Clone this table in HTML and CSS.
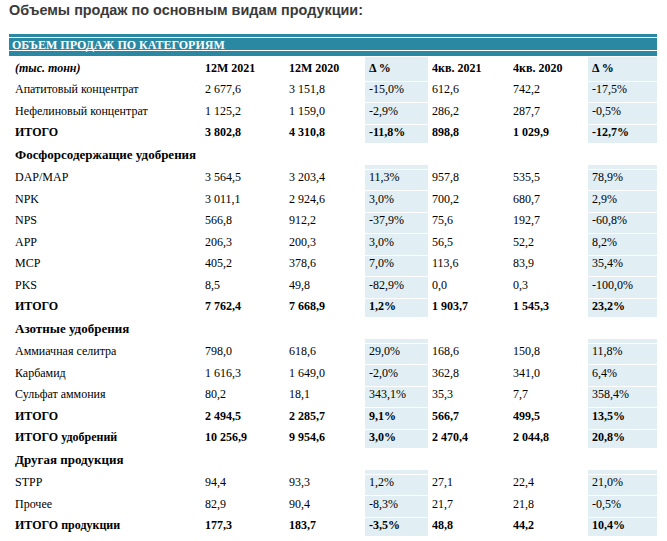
FILE: index.html
```html
<!DOCTYPE html>
<html lang="ru">
<head>
<meta charset="utf-8">
<title>Объемы продаж</title>
<link rel="stylesheet" href="styles.css">
</head>
<body>
<div class="page">
  <h1 class="title">Объемы продаж по основным видам продукции:</h1>
  <div class="bar"><span class="bar-label">ОБЪЕМ ПРОДАЖ ПО КАТЕГОРИЯМ</span></div>
  <div class="tbl">
    <div class="row head">
      <div class="c lbl unit">(тыс. тонн)</div><div class="c">12M 2021</div><div class="c">12M 2020</div><div class="c d">Δ %</div><div class="c">4кв. 2021</div><div class="c">4кв. 2020</div><div class="c d">Δ %</div>
    </div>
    <div class="row">
      <div class="c lbl">Апатитовый концентрат</div><div class="c">2 677,6</div><div class="c">3 151,8</div><div class="c d">-15,0%</div><div class="c">612,6</div><div class="c">742,2</div><div class="c d">-17,5%</div>
    </div>
    <div class="row">
      <div class="c lbl">Нефелиновый концентрат</div><div class="c">1 125,2</div><div class="c">1 159,0</div><div class="c d">-2,9%</div><div class="c">286,2</div><div class="c">287,7</div><div class="c d">-0,5%</div>
    </div>
    <div class="row tot end">
      <div class="c lbl">ИТОГО</div><div class="c">3 802,8</div><div class="c">4 310,8</div><div class="c d">-11,8%</div><div class="c">898,8</div><div class="c">1 029,9</div><div class="c d">-12,7%</div>
    </div>
    <div class="row sec">
      <div class="c lbl">Фосфорсодержащие удобрения</div><div class="c"></div><div class="c"></div><div class="c d"></div><div class="c"></div><div class="c"></div><div class="c d"></div>
    </div>
    <div class="row">
      <div class="c lbl">DAP/MAP</div><div class="c">3 564,5</div><div class="c">3 203,4</div><div class="c d">11,3%</div><div class="c">957,8</div><div class="c">535,5</div><div class="c d">78,9%</div>
    </div>
    <div class="row">
      <div class="c lbl">NPK</div><div class="c">3 011,1</div><div class="c">2 924,6</div><div class="c d">3,0%</div><div class="c">700,2</div><div class="c">680,7</div><div class="c d">2,9%</div>
    </div>
    <div class="row">
      <div class="c lbl">NPS</div><div class="c">566,8</div><div class="c">912,2</div><div class="c d">-37,9%</div><div class="c">75,6</div><div class="c">192,7</div><div class="c d">-60,8%</div>
    </div>
    <div class="row">
      <div class="c lbl">APP</div><div class="c">206,3</div><div class="c">200,3</div><div class="c d">3,0%</div><div class="c">56,5</div><div class="c">52,2</div><div class="c d">8,2%</div>
    </div>
    <div class="row">
      <div class="c lbl">MCP</div><div class="c">405,2</div><div class="c">378,6</div><div class="c d">7,0%</div><div class="c">113,6</div><div class="c">83,9</div><div class="c d">35,4%</div>
    </div>
    <div class="row">
      <div class="c lbl">PKS</div><div class="c">8,5</div><div class="c">49,8</div><div class="c d">-82,9%</div><div class="c">0,0</div><div class="c">0,3</div><div class="c d">-100,0%</div>
    </div>
    <div class="row tot end">
      <div class="c lbl">ИТОГО</div><div class="c">7 762,4</div><div class="c">7 668,9</div><div class="c d">1,2%</div><div class="c">1 903,7</div><div class="c">1 545,3</div><div class="c d">23,2%</div>
    </div>
    <div class="row sec">
      <div class="c lbl">Азотные удобрения</div><div class="c"></div><div class="c"></div><div class="c d"></div><div class="c"></div><div class="c"></div><div class="c d"></div>
    </div>
    <div class="row">
      <div class="c lbl">Аммиачная селитра</div><div class="c">798,0</div><div class="c">618,6</div><div class="c d">29,0%</div><div class="c">168,6</div><div class="c">150,8</div><div class="c d">11,8%</div>
    </div>
    <div class="row">
      <div class="c lbl">Карбамид</div><div class="c">1 616,3</div><div class="c">1 649,0</div><div class="c d">-2,0%</div><div class="c">362,8</div><div class="c">341,0</div><div class="c d">6,4%</div>
    </div>
    <div class="row">
      <div class="c lbl">Сульфат аммония</div><div class="c">80,2</div><div class="c">18,1</div><div class="c d">343,1%</div><div class="c">35,3</div><div class="c">7,7</div><div class="c d">358,4%</div>
    </div>
    <div class="row tot">
      <div class="c lbl">ИТОГО</div><div class="c">2 494,5</div><div class="c">2 285,7</div><div class="c d">9,1%</div><div class="c">566,7</div><div class="c">499,5</div><div class="c d">13,5%</div>
    </div>
    <div class="row tot end">
      <div class="c lbl">ИТОГО удобрений</div><div class="c">10 256,9</div><div class="c">9 954,6</div><div class="c d">3,0%</div><div class="c">2 470,4</div><div class="c">2 044,8</div><div class="c d">20,8%</div>
    </div>
    <div class="row sec">
      <div class="c lbl">Другая продукция</div><div class="c"></div><div class="c"></div><div class="c d"></div><div class="c"></div><div class="c"></div><div class="c d"></div>
    </div>
    <div class="row">
      <div class="c lbl">STPP</div><div class="c">94,4</div><div class="c">93,3</div><div class="c d">1,2%</div><div class="c">27,1</div><div class="c">22,4</div><div class="c d">21,0%</div>
    </div>
    <div class="row">
      <div class="c lbl">Прочее</div><div class="c">82,9</div><div class="c">90,4</div><div class="c d">-8,3%</div><div class="c">21,7</div><div class="c">21,8</div><div class="c d">-0,5%</div>
    </div>
    <div class="row tot end">
      <div class="c lbl">ИТОГО продукции</div><div class="c">177,3</div><div class="c">183,7</div><div class="c d">-3,5%</div><div class="c">48,8</div><div class="c">44,2</div><div class="c d">10,4%</div>
    </div>
  </div>
</div>
</body>
</html>
```
FILE: styles.css
```css
html, body {
  margin: 0;
  padding: 0;
  background: #ffffff;
}

.page {
  width: 648px;
  padding: 2px 10px 0 9px;
}

.title {
  margin: 0;
  font-family: "Liberation Sans", Arial, sans-serif;
  font-size: 14.4px;
  line-height: 17px;
  font-weight: bold;
  color: #3a3a3a;
}

.bar {
  margin-top: 15px;
  height: 22px;
  box-sizing: border-box;
  padding: 3px 0 0 3px;
  background: linear-gradient(to bottom,
    #2b88a2 0, #2b88a2 3px,
    #ffffff 3px, #ffffff 4px,
    #2b88a2 4px, #2b88a2 16px,
    #ffffff 16px, #ffffff 17px,
    #2b88a2 17px);
}

.bar-label {
  display: block;
  font-family: "Liberation Serif", "Times New Roman", serif;
  font-size: 12px;
  line-height: 17px;
  font-weight: bold;
  color: #ffffff;
  white-space: nowrap;
}

.tbl {
  font-family: "Liberation Serif", "Times New Roman", serif;
  font-size: 12px;
  color: #000000;
}

.row {
  display: grid;
  grid-template-columns: 192px 84px 80px 63px 81px 79px 69px;
  height: 21.5px;
}

.c {
  box-sizing: border-box;
  padding: 1.5px 0 0 4px;
  line-height: 14px;
  white-space: nowrap;
}

.c.lbl {
  padding-left: 6px;
}

.c.d {
  background: #e1eef4;
  border-top: 1px solid #ffffff;
  padding-top: 0.5px;
}

.row.head {
  height: 24.5px;
  font-weight: bold;
}

.row.head .c {
  padding-top: 5px;
}

.row.head .c.d {
  padding-top: 4px;
}

.unit {
  font-style: italic;
}

.row.tot {
  font-weight: bold;
}

.row.end .c.d {
  border-bottom: 2px solid #ffffff;
}

.row.sec {
  height: 23.5px;
  font-weight: bold;
}

.row.sec .c {
  padding-top: 3px;
}

.row.sec .c.lbl {
  font-size: 13px;
}

.row.sec .c.d {
  border-top: 0;
  background: linear-gradient(to bottom, #ffffff 0, #ffffff 20px, #e1eef4 20px);
}
```
